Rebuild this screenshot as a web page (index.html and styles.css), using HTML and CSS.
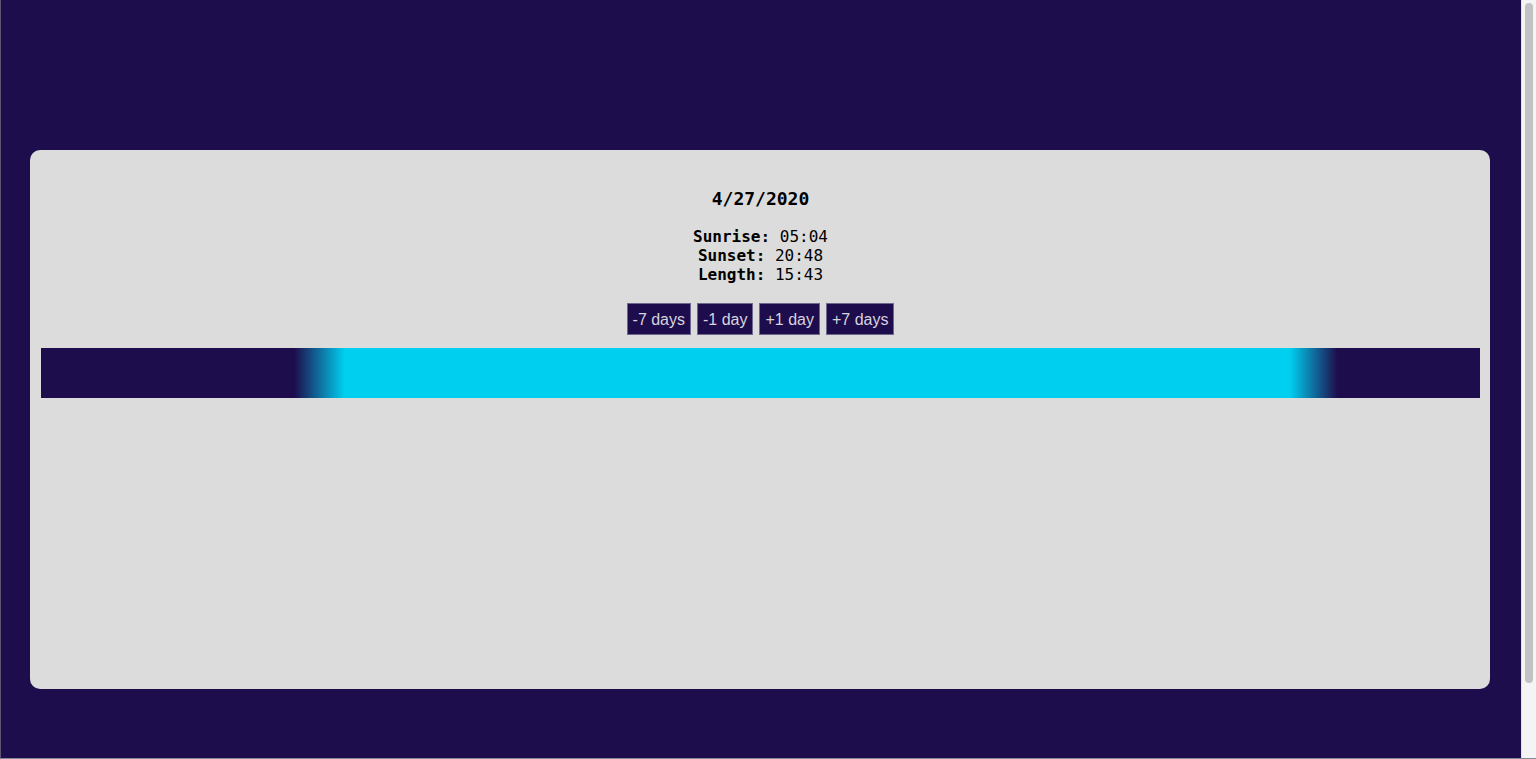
FILE: index.html
```html
<!DOCTYPE html>
<html lang="en">
<head>
<meta charset="utf-8">
<title>Day length</title>
<link rel="stylesheet" href="styles.css">
</head>
<body>
<div class="window">
  <main class="page">
    <section class="card">
      <h1 class="date">4/27/2020</h1>
      <div class="info">
        <div><b>Sunrise:</b> 05:04</div>
        <div><b>Sunset:</b> 20:48</div>
        <div><b>Length:</b> 15:43</div>
      </div>
      <div class="controls">
        <button class="btn">-7 days</button>
        <button class="btn">-1 day</button>
        <button class="btn">+1 day</button>
        <button class="btn">+7 days</button>
      </div>
      <div class="daybar"></div>
    </section>
  </main>
  <div class="scrollbar"><div class="thumb"></div></div>
</div>
</body>
</html>
```
FILE: styles.css
```css
html, body {
  margin: 0;
  padding: 0;
  background: #1e0d4d;
  overflow: hidden;
}
.window {
  display: flex;
  width: 1536px;
  height: 759px;
  box-sizing: border-box;
  border-left: 1px solid #5c5670;
  border-bottom: 1px solid #8a869a;
}
.page {
  flex: 1;
  box-sizing: border-box;
  padding: 150px 31px 0 29px;
}
.card {
  height: 539px;
  box-sizing: border-box;
  background: #dcdcdc;
  border-radius: 10px;
  padding: 38px 10px 0 11px;
  text-align: center;
  font-family: "DejaVu Sans Mono", monospace;
  color: #000;
}
.date {
  margin: 0;
  font-size: 18px;
  line-height: 21px;
  font-weight: 700;
}
.info {
  margin-top: 18px;
  font-size: 16px;
  line-height: 19px;
}
.info b {
  font-weight: 700;
}
.controls {
  margin-top: 19px;
  display: flex;
  justify-content: center;
  gap: 6px;
}
.btn {
  height: 32px;
  box-sizing: border-box;
  padding: 2px 5px 0;
  margin: 0;
  background: #1e0d4d;
  color: #d6d4de;
  border: 1px solid #6e6890;
  border-radius: 0;
  font-family: "Liberation Sans", Arial, sans-serif;
  font-size: 16px;
}
.daybar {
  margin-top: 13px;
  height: 50px;
  background: linear-gradient(to right,
    #1e0d4d 17.6%,
    #00cfef 21.1%,
    #00cfef 86.8%,
    #1e0d4d 90.1%);
}
.scrollbar {
  width: 15px;
  flex: none;
  background: #f4f4f4;
  border-left: 1px solid #e2e2e2;
  box-sizing: border-box;
  padding: 3px 3px 0 3px;
}
.thumb {
  height: 680px;
  background: #c2c2c2;
  border-radius: 4px;
}
```
